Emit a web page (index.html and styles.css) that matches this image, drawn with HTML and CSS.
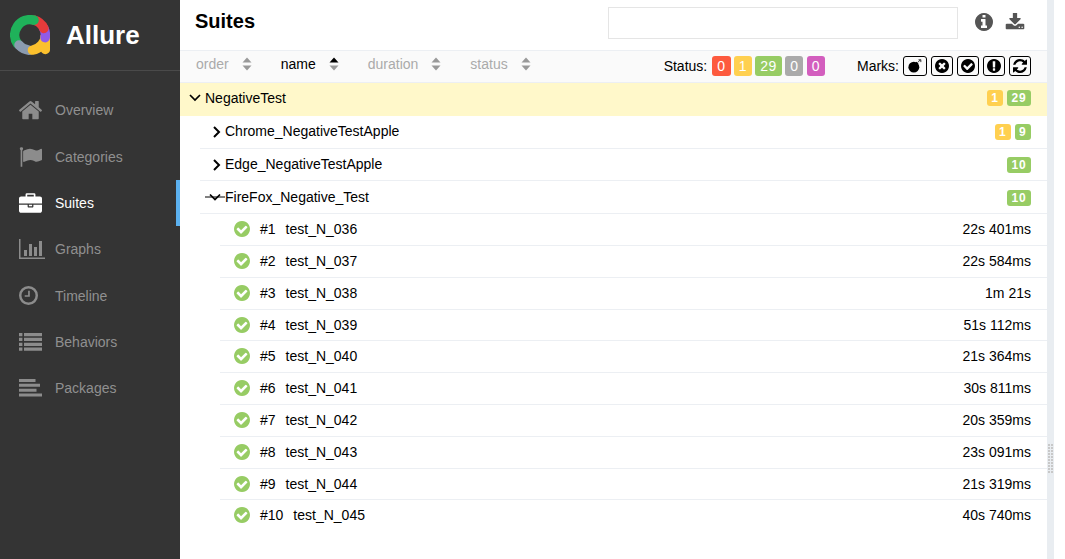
FILE: index.html
```html
<!DOCTYPE html>
<html>
<head>
    <title>Allure Report</title>
    <link rel="stylesheet" href="styles.css">
</head>
<body>
    <svg class="sprite" xmlns="http://www.w3.org/2000/svg">
        <symbol id="i-home" viewBox="92 228 1608 1308" preserveAspectRatio="xMinYMid meet"><path d="M1472 992v480q0 26-19 45t-45 19h-384v-384h-256v384h-384q-26 0-45-19t-19-45v-480q0-1 .5-3t.5-3l575-474 575 474q1 2 1 6zm223-69l-62 74q-8 9-21 11h-3q-13 0-21-7l-692-577-692 577q-12 8-24 7-13-2-21-11l-62-74q-8-10-7-23.5t11-21.5l719-599q32-26 76-26t76 26l244 204v-195q0-14 9-23t23-9h192q14 0 23 9t9 23v408l219 182q10 8 11 21.5t-7 23.5z"/></symbol>
        <symbol id="i-flag" viewBox="0 128 1792 1536" preserveAspectRatio="xMinYMid meet"><path d="M320 256q0 72-64 110v1266q0 13-9.5 22.5t-22.5 9.5h-64q-13 0-22.5-9.5t-9.5-22.5v-1266q-64-38-64-110 0-53 37.5-90.5t90.5-37.5 90.5 37.5 37.5 90.5zm1472 64v763q0 25-12.5 38.5t-39.5 27.5q-215 116-369 116-61 0-123.5-22t-108.5-48-115.5-48-142.5-22q-192 0-464 146-17 9-33 9-26 0-45-19t-19-45v-742q0-32 31-55 21-14 79-43 236-120 421-120 107 0 200 29t219 88q38 19 88 19 54 0 117.5-21t110-47 88-47 54.5-21q26 0 45 19t19 45z"/></symbol>
        <symbol id="i-case" viewBox="0 0 1792 1536" preserveAspectRatio="xMinYMid meet"><path d="M640 256h512v-128h-512v128zm1152 640v480q0 66-47 113t-113 47h-1472q-66 0-113-47t-47-113v-480h672v160q0 26 19 45t45 19h320q26 0 45-19t19-45v-160h672zm-768 0v128h-256v-128h256zm768-480v384h-1792v-384q0-66 47-113t113-47h352v-160q0-40 28-68t68-28h576q40 0 68 28t28 68v160h352q66 0 113 47t47 113z"/></symbol>
        <symbol id="i-chart" viewBox="0 0 26 20"><path d="M0 0h1.500v18.500H26V20H0z"/><path d="M5 11h3v6H5zM10 5h3v12h-3zM15 8h3v9h-3zM20 2h3v15h-3z"/></symbol>
        <symbol id="i-clock" viewBox="0 0 20 20"><path fill-rule="evenodd" d="M10 0a10 10 0 1 0 0 20a10 10 0 1 0 0-20zm0 2.600a7.400 7.400 0 1 1 0 14.800a7.400 7.400 0 1 1 0-14.800z"/><path d="M9.600 5h1.800v6.400H6v-1.700h3.600z"/></symbol>
        <symbol id="i-list" viewBox="0 0 23 18" preserveAspectRatio="none"><path d="M0 0h3.400v3.200H0zM5 0h18v3.200H5zM0 4.800h3.400V8H0zM5 4.800h18V8H5zM0 9.700h3.400v3.200H0zM5 9.700h18v3.200H5zM0 14.600h3.400v3.200H0zM5 14.600h18v3.200H5z"/></symbol>
        <symbol id="i-pack" viewBox="0 0 23 18" preserveAspectRatio="none"><path d="M0 0h16.500v3H0zM0 4.800h21v3H0zM0 9.700h17.500v3H0zM0 14.500h23v3.100H0z"/></symbol>
        <symbol id="i-info" viewBox="128 128 1536 1536"><path d="M1152 1376v-160q0-14-9-23t-23-9h-96v-512q0-14-9-23t-23-9h-320q-14 0-23 9t-9 23v160q0 14 9 23t23 9h96v320h-96q-14 0-23 9t-9 23v160q0 14 9 23t23 9h448q14 0 23-9t9-23zm-128-896v-160q0-14-9-23t-23-9h-192q-14 0-23 9t-9 23v160q0 14 9 23t23 9h192q14 0 23-9t9-23zm640 416q0 209-103 385.500t-279.500 279.500-385.500 103-385.500-103-279.500-279.500-103-385.500 103-385.500 279.500-279.500 385.500-103 385.500 103 279.500 279.500 103 385.500z"/></symbol>
        <symbol id="i-download" viewBox="0 128 1792 1408"><path d="M1344 1344q0-26-19-45t-45-19-45 19-19 45 19 45 45 19 45-19 19-45zm256 0q0-26-19-45t-45-19-45 19-19 45 19 45 45 19 45-19 19-45zm128-224v320q0 40-28 68t-68 28h-1472q-40 0-68-28t-28-68v-320q0-40 28-68t68-28h465l135 136q58 56 136 56t136-56l136-136h464q40 0 68 28t28 68zm-325-569q17 41-14 70l-448 448q-18 19-45 19t-45-19l-448-448q-31-29-14-70 17-39 59-39h256v-448q0-26 19-45t45-19h256q26 0 45 19t19 45v448h256q42 0 59 39z"/></symbol>
        <symbol id="i-check" viewBox="128 128 1536 1536"><path d="M1412 734q0-28-18-46l-91-90q-19-19-45-19t-45 19l-408 407-226-226q-19-19-45-19t-45 19l-91 90q-18 18-18 46 0 27 18 45l362 362q19 19 45 19 27 0 46-19l543-543q18-18 18-45zm252 162q0 209-103 385.500t-279.500 279.500-385.500 103-385.500-103-279.500-279.500-103-385.500 103-385.500 279.500-279.500 385.500-103 385.500 103 279.500 279.500 103 385.500z"/></symbol>
        <symbol id="i-times" viewBox="128 128 1536 1536"><path d="M1277 1122q0-26-19-45l-181-181 181-181q19-19 19-45 0-27-19-46l-90-90q-19-19-46-19-26 0-45 19l-181 181-181-181q-19-19-45-19-27 0-46 19l-90 90q-19 19-19 46 0 26 19 45l181 181-181 181q-19 19-19 45 0 27 19 46l90 90q19 19 46 19 26 0 45-19l181-181 181 181q19 19 45 19 27 0 46-19l90-90q19-19 19-46zm387-226q0 209-103 385.500t-279.500 279.500-385.500 103-385.500-103-279.500-279.500-103-385.500 103-385.500 279.500-279.500 385.500-103 385.500 103 279.500 279.500 103 385.500z"/></symbol>
        <symbol id="i-excl" viewBox="128 128 1536 1536"><path d="M896 128q209 0 385.500 103t279.500 279.500 103 385.500-103 385.500-279.500 279.500-385.500 103-385.500-103-279.500-279.500-103-385.500 103-385.500 279.500-279.500 385.500-103zm128 1247v-190q0-14-9-23.500t-22-9.500h-192q-13 0-23 10t-10 23v190q0 13 10 23t23 10h192q13 0 22-9.500t9-23.500zm-2-344l18-621q0-12-10-18-10-8-24-8h-220q-14 0-24 8-10 6-10 18l17 621q0 10 10 17.500t24 7.500h185q14 0 23.500-7.500t10.500-17.500z"/></symbol>
        <symbol id="i-refresh" viewBox="128 128 1536 1536"><path d="M1639 1056q0 5-1 7-64 268-268 434.500t-478 166.500q-146 0-282.500-55t-243.500-157l-129 129q-19 19-45 19t-45-19-19-45v-448q0-26 19-45t45-19h448q26 0 45 19t19 45-19 45l-137 137q71 66 161 102t187 36q134 0 250-65t186-179q11-17 53-117 8-23 30-23h192q13 0 22.500 9.500t9.500 22.500zm25-800v448q0 26-19 45t-45 19h-448q-26 0-45-19t-19-45 19-45l138-138q-148-137-349-137-134 0-250 65t-186 179q-11 17-53 117-8 23-30 23h-199q-13 0-22.500-9.500t-9.500-22.500v-7q65-268 270-434.500t480-166.500q146 0 284 55.500t245 156.500l130-129q19-19 45-19t45 19 19 45z"/></symbol>
        <symbol id="i-bomb" viewBox="0 0 18 18"><circle cx="7.500" cy="10.500" r="7"/><path d="M11 3.500l2.500 2.500-2 2-2.500-2.500z"/><path d="M12.500 4.500L16 1M13.500 1H16.500V4" fill="none" stroke="#000" stroke-width="1"/></symbol>
        <symbol id="i-sort" viewBox="0 0 10 14"><path class="up" d="M5 0.500L9.500 5.500H0.500z"/><path class="down" d="M0.500 8.500H9.500L5 13.500z"/></symbol>
        <symbol id="i-right" viewBox="0 0 10 12"><path d="M2 1l5 5-5 5" fill="none" stroke="#000" stroke-width="2"/></symbol>
        <symbol id="i-down" viewBox="0 0 12 10"><path d="M1 2l5 5 5-5" fill="none" stroke="#000" stroke-width="1.700"/></symbol>
    </svg>

    <div class="app">
        <aside class="side">
            <div class="brand">
                <svg class="logo" viewBox="0 0 40 40" fill="none" stroke-width="9.500" stroke-linecap="round">
                    <path stroke="#8b9bb0" d="M9 30A15.300 15.300 0 0 0 19 35.200"/>
                    <path stroke="#fbc02d" d="M22.500 35.100A15.300 15.300 0 0 0 35.300 20V34.500"/>
                    <path stroke="#8f5be8" d="M33.900 13.500A15.300 15.300 0 0 1 35.100 22.700"/>
                    <path stroke="#e53b3b" d="M24 5.200A15.300 15.300 0 0 1 33.900 13.500"/>
                    <path stroke="#1fb25a" d="M7.500 28.800A15.300 15.300 0 0 1 24 5.200"/>
                    <path stroke="#8b9bb0" d="M9 30l0.500 0.500"/>
                </svg>
                <span class="brand-name">Allure</span>
            </div>
            <nav class="nav">
                <a class="nav-item"><svg class="nav-icon"><use href="#i-home"/></svg>Overview</a>
                <a class="nav-item"><svg class="nav-icon"><use href="#i-flag"/></svg>Categories</a>
                <a class="nav-item active"><svg class="nav-icon"><use href="#i-case"/></svg>Suites</a>
                <a class="nav-item"><svg class="nav-icon wide"><use href="#i-chart"/></svg>Graphs</a>
                <a class="nav-item"><svg class="nav-icon small"><use href="#i-clock"/></svg>Timeline</a>
                <a class="nav-item"><svg class="nav-icon short"><use href="#i-list"/></svg>Behaviors</a>
                <a class="nav-item"><svg class="nav-icon short"><use href="#i-pack"/></svg>Packages</a>
            </nav>
        </aside>

        <main class="main">
            <header class="top">
                <h1 class="title">Suites</h1>
                <input class="search" type="text">
                <svg class="top-icon info"><use href="#i-info"/></svg>
                <svg class="top-icon download"><use href="#i-download"/></svg>
            </header>

            <div class="controls">
                <span class="sorter">order<svg class="sort"><use href="#i-sort"/></svg></span>
                <span class="sorter current">name<svg class="sort"><use href="#i-sort"/></svg></span>
                <span class="sorter">duration<svg class="sort"><use href="#i-sort"/></svg></span>
                <span class="sorter">status<svg class="sort"><use href="#i-sort"/></svg></span>
                <span class="spacer"></span>
                <span class="ctl-label">Status:</span>
                <span class="stat red">0</span>
                <span class="stat yellow">1</span>
                <span class="stat green">29</span>
                <span class="stat grey">0</span>
                <span class="stat purple">0</span>
                <span class="ctl-label marks-label">Marks:</span>
                <span class="mark first"><svg><use href="#i-bomb"/></svg></span>
                <span class="mark"><svg><use href="#i-times"/></svg></span>
                <span class="mark"><svg><use href="#i-check"/></svg></span>
                <span class="mark"><svg><use href="#i-excl"/></svg></span>
                <span class="mark"><svg><use href="#i-refresh"/></svg></span>
            </div>

            <div class="tree">
                <div class="row root">
                    <svg class="arrow-down"><use href="#i-down"/></svg>
                    <span class="name">NegativeTest</span>
                    <span class="badge yellow">1</span><span class="badge green">29</span>
                </div>
                <div class="row group">
                    <svg class="arrow-right"><use href="#i-right"/></svg>
                    <span class="name">Chrome_NegativeTestApple</span>
                    <span class="badge yellow">1</span><span class="badge green">9</span>
                </div>
                <div class="row group">
                    <svg class="arrow-right"><use href="#i-right"/></svg>
                    <span class="name">Edge_NegativeTestApple</span>
                    <span class="badge green">10</span>
                </div>
                <div class="row group open">
                    <svg class="arrow-struck" viewBox="0 0 20 10"><path d="M0 5h20" stroke="#000" stroke-width="1"/><path d="M5 2.500l5 5 5-5" fill="none" stroke="#000" stroke-width="1.700"/></svg>
                    <span class="name">FireFox_Negative_Test</span>
                    <span class="badge green">10</span>
                </div>
                <div class="row test"><svg class="ok"><use href="#i-check"/></svg><span class="order">#1</span><span class="name">test_N_036</span><span class="time">22s 401ms</span></div>
                <div class="row test"><svg class="ok"><use href="#i-check"/></svg><span class="order">#2</span><span class="name">test_N_037</span><span class="time">22s 584ms</span></div>
                <div class="row test"><svg class="ok"><use href="#i-check"/></svg><span class="order">#3</span><span class="name">test_N_038</span><span class="time">1m 21s</span></div>
                <div class="row test"><svg class="ok"><use href="#i-check"/></svg><span class="order">#4</span><span class="name">test_N_039</span><span class="time">51s 112ms</span></div>
                <div class="row test"><svg class="ok"><use href="#i-check"/></svg><span class="order">#5</span><span class="name">test_N_040</span><span class="time">21s 364ms</span></div>
                <div class="row test"><svg class="ok"><use href="#i-check"/></svg><span class="order">#6</span><span class="name">test_N_041</span><span class="time">30s 811ms</span></div>
                <div class="row test"><svg class="ok"><use href="#i-check"/></svg><span class="order">#7</span><span class="name">test_N_042</span><span class="time">20s 359ms</span></div>
                <div class="row test"><svg class="ok"><use href="#i-check"/></svg><span class="order">#8</span><span class="name">test_N_043</span><span class="time">23s 091ms</span></div>
                <div class="row test"><svg class="ok"><use href="#i-check"/></svg><span class="order">#9</span><span class="name">test_N_044</span><span class="time">21s 319ms</span></div>
                <div class="row test last"><svg class="ok"><use href="#i-check"/></svg><span class="order">#10</span><span class="name">test_N_045</span><span class="time">40s 740ms</span></div>
            </div>
        </main>

        <div class="gutter"><span class="grip"></span></div>
        <div class="rest"></div>
    </div>
</body>
</html>
```

FILE: styles.css
```css
html, body {
    height: 100%;
}

body {
    font-family: "Liberation Sans", Arial, sans-serif;
    font-size: 14px;
    color: #000;
    background-color: #fff;
    margin: 0;
    padding: 0;
    overflow: hidden;
}

.sprite {
    display: none;
}

.app {
    display: flex;
    height: 559px;
}

/* sidebar */
.side {
    width: 180px;
    flex: none;
    background-color: #343434;
}

.brand {
    display: flex;
    align-items: center;
    height: 71px;
    padding-left: 10px;
    box-sizing: border-box;
    border-bottom: 1px solid #4a4a4a;
}

.logo {
    width: 40px;
    height: 40px;
    flex: none;
}

.brand-name {
    margin-left: 16px;
    color: #fff;
    font-size: 26px;
    font-weight: bold;
}

.nav {
    padding-top: 16.2px;
}

.nav-item {
    display: flex;
    align-items: center;
    height: 46.3px;
    padding-left: 19px;
    box-sizing: border-box;
    color: #909090;
    fill: #8c8c8c;
}

.nav-item.active {
    color: #fff;
    fill: #fff;
    border-right: 4px solid #5bb0ef;
}

.nav-icon {
    width: 23px;
    height: 20px;
    margin-right: 13px;
    flex: none;
}

.nav-icon.wide {
    width: 26px;
    margin-right: 10px;
}

.nav-icon.small {
    width: 19px;
    height: 19px;
    margin-right: 17px;
}

.nav-icon.short {
    height: 18px;
}

/* header */
.main {
    width: 867px;
    flex: none;
}

.top {
    display: flex;
    align-items: center;
    height: 44px;
    padding-left: 15px;
    box-sizing: border-box;
    margin-bottom: 6px;
}

.title {
    margin: 0 0 2px;
    font-size: 20px;
    font-weight: bold;
    flex: 1;
}

.search {
    width: 350px;
    height: 32px;
    margin-top: 1px;
    padding: 0;
    box-sizing: border-box;
    border: 1px solid #e5e5e5;
    flex: none;
}

.top-icon {
    fill: #555;
    flex: none;
}

.top-icon.info {
    width: 18px;
    height: 18px;
    margin-left: 17px;
}

.top-icon.download {
    width: 20px;
    height: 17px;
    margin-left: 12px;
    margin-right: 22px;
    margin-top: -1px;
}

/* sort + filter bar */
.controls {
    display: flex;
    align-items: center;
    height: 33px;
    box-sizing: border-box;
    padding: 0 16px 1px;
    background-color: #fafafa;
    border-top: 1px solid #eceff3;
    border-bottom: 1px solid #eceff3;
}

.sorter {
    display: flex;
    align-items: center;
    color: #aaa;
    margin-right: 29px;
    margin-top: -4px;
}

.sort {
    --up: #999;
    width: 10px;
    height: 14px;
    margin-left: 13px;
    fill: #999;
}

.up {
    fill: var(--up);
}

.sorter.current {
    color: #000;
}

.sorter.current .sort {
    --up: #000;
}

.spacer {
    flex: 1;
}

.ctl-label {
    margin-right: 5px;
}

.marks-label {
    margin-left: 32px;
    margin-right: 4px;
}

.stat {
    min-width: 8px;
    height: 20px;
    line-height: 20px;
    padding: 0 5px;
    margin-right: 3.25px;
    border-radius: 3px;
    color: #fff;
    text-align: center;
    letter-spacing: 0.5px;
}

.stat.purple {
    margin-right: 0;
}

.red { background-color: #fd5a3e; }
.yellow { background-color: #ffd050; }
.green { background-color: #97cc64; }
.grey { background-color: #aaa; }
.purple { background-color: #d35ebe; }

.mark {
    display: flex;
    align-items: center;
    justify-content: center;
    width: 22px;
    height: 20px;
    box-sizing: border-box;
    margin-left: 4px;
    border: 1px solid #000;
    border-radius: 3px;
}

.mark.first {
    width: 24px;
    margin-left: 0;
}

.mark svg {
    width: 14px;
    height: 14px;
}

/* tree */
.row {
    display: flex;
    align-items: center;
    height: 31.8px;
    box-sizing: border-box;
    padding-right: 16px;
    border-bottom: 1px solid #eceff3;
}

.row .name {
    flex: 1;
}

.root {
    height: 33px;
    padding-left: 9px;
    padding-bottom: 3px;
    background-color: #fff8ca;
    border-bottom: none;
}

.group {
    margin-left: 20px;
    height: 32.73px;
    padding-left: 12px;
}

.group .name {
    margin-bottom: 1px;
}

.group .badge {
    margin-top: 1px;
}

.group.open {
    padding-left: 5px;
}

.test {
    margin-left: 40px;
    padding-left: 14px;
    padding-bottom: 0.6px;
}

.test.last {
    padding-bottom: 1.6px;
    border-bottom: none;
}

.arrow-down {
    width: 12px;
    height: 10px;
    margin-right: 4px;
}

.arrow-right {
    width: 10px;
    height: 12px;
    margin-right: 3px;
}

.arrow-struck {
    width: 20px;
    height: 10px;
    flex: none;
}

.badge {
    height: 16px;
    line-height: 16px;
    padding: 0 4.25px;
    margin-left: 4px;
    border-radius: 3px;
    color: #fff;
    font-size: 12px;
    font-weight: bold;
    letter-spacing: 1px;
}

.ok {
    width: 16px;
    height: 16px;
    fill: #97cc64;
    margin-right: 10px;
    flex: none;
}

.order {
    margin-right: 10px;
}

/* scrollbar strip */
.gutter {
    width: 7px;
    flex: none;
    background-color: #e9edf1;
    padding-top: 444px;
    box-sizing: border-box;
}

.grip {
    display: block;
    width: 5px;
    height: 30px;
    margin-left: 1px;
    background-color: #c8c8c8;
    background-image: linear-gradient(90deg, transparent 2px, #e9edf1 2px), linear-gradient(transparent 2px, #e9edf1 2px);
    background-size: 3px 3px;
}

.rest {
    flex: 1;
}
```
